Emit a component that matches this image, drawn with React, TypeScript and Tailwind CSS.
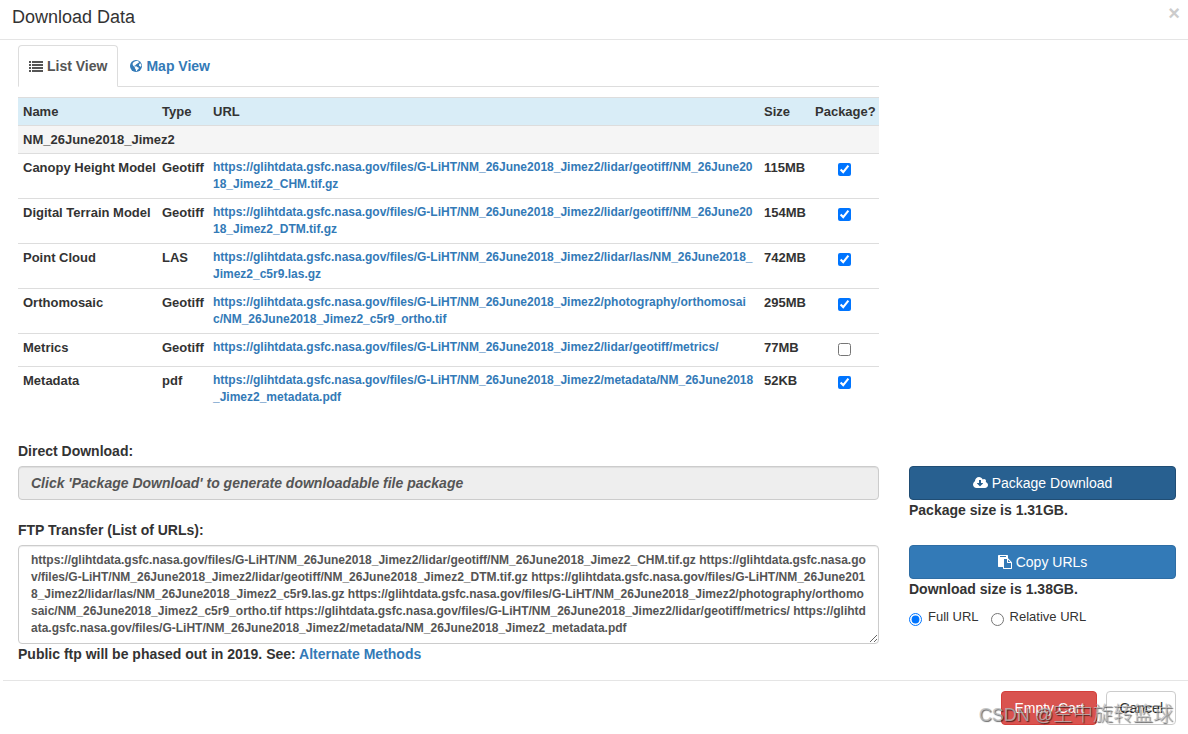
import React, { useState } from 'react';

const BASE_URL = 'https://glihtdata.gsfc.nasa.gov/files/G-LiHT/NM_26June2018_Jimez2/';

interface DataFile {
  name: string;
  type: string;
  path: string;
  size: string;
  packaged: boolean;
}

const FILES: DataFile[] = [
  { name: 'Canopy Height Model', type: 'Geotiff', path: 'lidar/geotiff/NM_26June2018_Jimez2_CHM.tif.gz', size: '115MB', packaged: true },
  { name: 'Digital Terrain Model', type: 'Geotiff', path: 'lidar/geotiff/NM_26June2018_Jimez2_DTM.tif.gz', size: '154MB', packaged: true },
  { name: 'Point Cloud', type: 'LAS', path: 'lidar/las/NM_26June2018_Jimez2_c5r9.las.gz', size: '742MB', packaged: true },
  { name: 'Orthomosaic', type: 'Geotiff', path: 'photography/orthomosaic/NM_26June2018_Jimez2_c5r9_ortho.tif', size: '295MB', packaged: true },
  { name: 'Metrics', type: 'Geotiff', path: 'lidar/geotiff/metrics/', size: '77MB', packaged: false },
  { name: 'Metadata', type: 'pdf', path: 'metadata/NM_26June2018_Jimez2_metadata.pdf', size: '52KB', packaged: true },
];

const ListIcon: React.FC = () => (
  <svg width="14" height="11" viewBox="0 0 14 11" fill="currentColor" aria-hidden="true">
    {[0, 3, 6, 9].map((y) => (
      <g key={y}>
        <rect x="0" y={y} width="2" height="2" />
        <rect x="3" y={y} width="11" height="2" />
      </g>
    ))}
  </svg>
);

const GlobeIcon: React.FC = () => (
  <svg width="12" height="12" viewBox="0 0 12 12" aria-hidden="true">
    <circle cx="6" cy="6" r="6" fill="currentColor" />
    <path d="M5.2 1.2l2.2-.4 1.8 1.1-.5.9-1 .1-.4 1.1-1.2.3-.4 1-1.3.2.5.9 1.4-.1.9.8 1.6.6-.2 1.2-1.2.8-.6 1.4-.8.2-.3-2-1-1.2.2-1.1-1.5-.9-.8-1.5.2-1.5 1.1-1.2z" fill="white" />
    <path d="M9.3 3.8l1.4-.3.5 1.7-.2 1.5-1-.3-.9-1.1z" fill="white" />
  </svg>
);

const CloudIcon: React.FC = () => (
  <svg width="15" height="14" viewBox="0 0 1920 1792" fill="currentColor" aria-hidden="true">
    <path d="M1280 928q0-14-9-23t-23-9h-224v-352q0-13-9.5-22.5t-22.5-9.5h-192q-13 0-22.5 9.5t-9.5 22.5v352h-224q-13 0-22.5 9.5t-9.5 22.5q0 14 9 23l352 352q9 9 23 9t23-9l351-351q10-12 10-24zm640 224q0 159-112.5 271.5t-271.5 112.5h-1088q-185 0-316.5-131.5t-131.5-316.5q0-130 70-240t188-165q-2-30-2-43 0-212 150-362t362-150q156 0 285.5 87t188.5 231q71-62 166-62 106 0 181 75t75 181q0 76-41 138 130 31 213.5 135.5t83.5 238.5z" />
  </svg>
);

const PasteIcon: React.FC = () => (
  <svg width="14" height="14" viewBox="0 0 1792 1792" fill="currentColor" aria-hidden="true">
    <path d="M768 1664h896v-640h-416q-40 0-68-28t-28-68v-416h-384v1152zm256-1440v-64q0-13-9.5-22.5t-22.5-9.5h-704q-13 0-22.5 9.5t-9.5 22.5v64q0 13 9.5 22.5t22.5 9.5h704q13 0 22.5-9.5t9.5-22.5zm256 672h299l-299-299v299zm512 128v672q0 40-28 68t-68 28h-960q-40 0-68-28t-28-68v-160h-544q-40 0-68-28t-28-68v-1344q0-40 28-68t68-28h1088q40 0 68 28t28 68v328q21 13 36 28l408 408q28 28 48 76t20 88z" />
  </svg>
);

const App: React.FC = () => {
  const [files, setFiles] = useState<DataFile[]>(FILES);
  const [urlMode, setUrlMode] = useState<'full' | 'relative'>('full');

  const togglePackaged = (name: string) => {
    setFiles(files.map((f) => (f.name === name ? { ...f, packaged: !f.packaged } : f)));
  };

  const urlList = files.map((f) => (urlMode === 'full' ? BASE_URL + f.path : f.path)).join(' ');

  return (
    <div className="relative overflow-hidden bg-white pb-2 font-['Liberation_Sans',Arial,'Noto_Sans_CJK_SC',sans-serif] text-sm leading-5 text-[#333]">
      {/* Header */}
      <header className="flex h-10 items-start justify-between border-b border-[#e5e5e5] pt-[5px] pr-2 pl-3">
        <h1 className="text-lg leading-6">Download Data</h1>
        <button type="button" aria-label="Close" className="text-xl leading-4 font-bold text-[#ccc]">×</button>
      </header>

      <div className="-mr-[3px] ml-[3px]">
        <main className="pt-[5px] pb-4">
          <div className="w-3/4 px-[15px]">
            {/* Tabs */}
            <nav className="flex border-b border-[#ddd] font-bold">
              <a href="#list" className="-mb-px flex h-[42px] items-center gap-1 rounded-t border border-[#ddd] border-b-white bg-white px-[10px] text-[#555]">
                <ListIcon />
                List View
              </a>
              <a href="#map" className="flex h-[41px] items-center gap-1 px-3 text-[#337ab7]">
                <GlobeIcon />
                Map View
              </a>
            </nav>

            {/* File table */}
            <table className="mt-[10px] w-full table-fixed border-collapse text-left align-top text-[13px] leading-[17px] font-bold">
              <colgroup>
                <col className="w-[139px]" />
                <col className="w-[51px]" />
                <col />
                <col className="w-[51px]" />
                <col className="w-[69px]" />
              </colgroup>
              <thead>
                <tr className="border-t border-[#ddd] bg-[#d9edf7]">
                  <th className="p-[5px]">Name</th>
                  <th className="p-[5px]">Type</th>
                  <th className="p-[5px]">URL</th>
                  <th className="p-[5px]">Size</th>
                  <th className="p-[5px]">Package?</th>
                </tr>
              </thead>
              <tbody>
                <tr className="border-t border-[#ddd] bg-[#f5f5f5]">
                  <td colSpan={5} className="p-[5px]">NM_26June2018_Jimez2</td>
                </tr>
                {files.map((file) => (
                  <tr key={file.name} className="border-t border-[#ddd] align-top">
                    <td className="p-[5px] whitespace-nowrap">{file.name}</td>
                    <td className="p-[5px]">{file.type}</td>
                    <td className="p-[5px] text-xs leading-[17px] break-all">
                      <a href={BASE_URL + file.path} className="text-[#337ab7]">{BASE_URL + file.path}</a>
                    </td>
                    <td className="p-[5px]">{file.size}</td>
                    <td className="px-[5px] pt-[9px] pb-[10px] text-center">
                      <input
                        type="checkbox"
                        aria-label={`Package ${file.name}`}
                        checked={file.packaged}
                        onChange={() => togglePackaged(file.name)}
                        className="mx-auto block size-[13px]"
                      />
                    </td>
                  </tr>
                ))}
              </tbody>
            </table>
          </div>

          {/* Direct download */}
          <div className="mt-[30px] flex items-end">
            <div className="w-3/4 px-[15px]">
              <label htmlFor="direct" className="mb-[5px] block font-bold">Direct Download:</label>
              <input
                id="direct"
                type="text"
                readOnly
                value="Click 'Package Download' to generate downloadable file package"
                className="block h-[34px] w-full rounded border border-[#ccc] bg-[#eee] px-3 font-bold text-[#555] italic shadow-[inset_0_1px_1px_rgba(0,0,0,0.075)]"
              />
            </div>
            <div className="w-1/4 px-[15px]">
              <button type="button" className="flex h-[34px] w-full items-center justify-center gap-1 rounded border border-[#204d74] bg-[#286090] text-white">
                <CloudIcon />
                Package Download
              </button>
            </div>
          </div>
          <div className="flex font-bold">
            <div className="w-3/4" />
            <p className="w-1/4 px-[15px]">Package size is 1.31GB.</p>
          </div>

          {/* Url list */}
          <div className="flex">
            <div className="w-3/4 px-[15px] font-bold">
              <label htmlFor="ftp" className="mb-[5px] block">FTP Transfer (List of URLs):</label>
              <textarea
                id="ftp"
                rows={5}
                readOnly
                value={urlList}
                className="block w-full rounded border border-[#ccc] bg-white px-3 py-[6px] text-xs leading-[17px] break-all text-[#555] shadow-[inset_0_1px_1px_rgba(0,0,0,0.075)]"
              />
              <p>
                Public ftp will be phased out in 2019. See:{' '}
                <a href="#methods" className="text-[#337ab7]">Alternate Methods</a>
              </p>
            </div>
            <div className="w-1/4 px-[15px] pt-[25px]">
              <button type="button" className="flex h-[34px] w-full items-center justify-center gap-1 rounded border border-[#2e6da4] bg-[#337ab7] text-white">
                <PasteIcon />
                Copy URLs
              </button>
              <p className="font-bold">Download size is 1.38GB.</p>
              <div className="mt-2 flex gap-3 text-[13px] leading-5">
                <label className="flex gap-[6px]">
                  <input type="radio" name="mode" checked={urlMode === 'full'} onChange={() => setUrlMode('full')} className="mt-[6px] size-[13px]" />
                  Full URL
                </label>
                <label className="flex gap-[6px]">
                  <input type="radio" name="mode" checked={urlMode === 'relative'} onChange={() => setUrlMode('relative')} className="mt-[6px] size-[13px]" />
                  Relative URL
                </label>
              </div>
            </div>
          </div>
        </main>

        {/* Footer */}
        <footer className="flex justify-end gap-[9px] border-t border-[#e5e5e5] px-[15px] pt-[10px]">
          <button type="button" className="h-[34px] rounded border border-[#d43f3a] bg-[#d9534f] px-3 text-white">Empty Cart</button>
          <button type="button" className="h-[34px] rounded border border-[#ccc] bg-white px-3">Cancel</button>
        </footer>
      </div>

      {/* Watermark over the footer */}
      <span className="pointer-events-none absolute right-[15px] bottom-[6px] text-xl leading-6 font-light text-[#bbb]/80 [text-shadow:1px_1px_1px_rgba(0,0,0,0.6)]">
        <span className="text-lg leading-6">CSDN @</span>空中旋转篮球
      </span>
    </div>
  );
};

export default App;
